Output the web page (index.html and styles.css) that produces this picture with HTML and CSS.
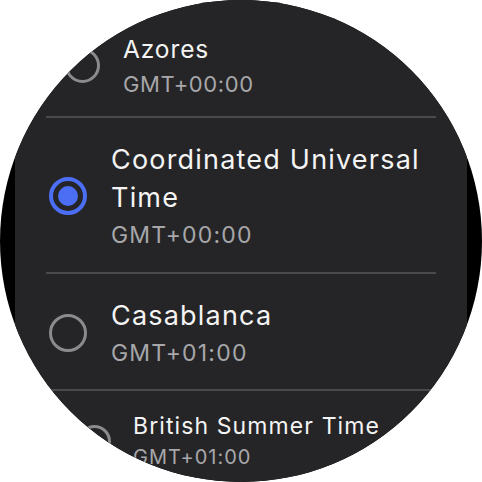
FILE: index.html
```html
<!DOCTYPE html>
<html>
<head>
<meta charset="utf-8">
<link rel="stylesheet" href="styles.css">
</head>
<body>
<div class="watch">
  <div class="screen">
    <div class="list">
      <div class="row row--azores">
        <span class="radio radio--azores"></span>
        <div class="text">
          <div class="title title--azores">Azores</div>
          <div class="sub sub--azores">GMT+00:00</div>
        </div>
      </div>
      <div class="row row--utc">
        <span class="radio radio--on"></span>
        <div class="text">
          <div class="title">Coordinated Universal Time</div>
          <div class="sub">GMT+00:00</div>
        </div>
      </div>
      <div class="row row--casa">
        <span class="radio"></span>
        <div class="text">
          <div class="title">Casablanca</div>
          <div class="sub">GMT+01:00</div>
        </div>
      </div>
      <div class="row row--bst">
        <span class="radio radio--bst"></span>
        <div class="text">
          <div class="title title--bst">British Summer Time</div>
          <div class="sub sub--bst">GMT+01:00</div>
        </div>
      </div>
    </div>
  </div>
</div>
</body>
</html>
```
FILE: styles.css
```css
html, body {
  margin: 0;
  padding: 0;
  background: #ffffff;
}
.watch {
  width: 482px;
  height: 482px;
  border-radius: 50%;
  background: #000000;
  overflow: hidden;
  font-family: Inter, "Open Sans", sans-serif;
}
.screen {
  height: 482px;
  margin: 0 15px;
  background: #252527;
  overflow: hidden;
}
.list {
  margin: 0 31px;
  padding-top: 12px;
}
.row {
  display: flex;
  align-items: center;
  gap: 24px;
  border-bottom: 2px solid #4a4a4d;
  box-sizing: border-box;
}
.row--azores { height: 106px; padding-left: 19px; padding-top: 3px; gap: 23px; }
.row--utc { height: 156px; padding-left: 3px; padding-top: 2px; }
.row--casa { height: 117px; padding-left: 3px; padding-top: 2px; }
.row--bst { height: 100px; padding-left: 32px; gap: 22px; border-bottom: none; }

.radio {
  flex: none;
  width: 38px;
  height: 38px;
  border-radius: 50%;
  border: 3px solid #8b8b8e;
  box-sizing: border-box;
  display: flex;
  align-items: center;
  justify-content: center;
}
.radio--azores { width: 35px; height: 35px; }
.radio--bst { width: 33px; height: 33px; }
.radio--on {
  border: 4px solid #4c6ef5;
}
.radio--on::after {
  content: "";
  width: 20px;
  height: 20px;
  border-radius: 50%;
  background: #4c6ef5;
}
.text {
  flex: 1;
  min-width: 0;
}
.title {
  color: #f4f4f4;
  font-size: 27px;
  line-height: 38px;
  letter-spacing: 1.2px;
}
.sub {
  color: #a7a7aa;
  font-size: 23px;
  line-height: 32px;
  letter-spacing: 1.2px;
  margin-top: 2px;
}
.title--azores { font-size: 24.5px; line-height: 34px; letter-spacing: 0.9px; }
.sub--azores { font-size: 22px; line-height: 30px; letter-spacing: 0.6px; margin-top: 3px; }
.title--bst { font-size: 23px; line-height: 32px; letter-spacing: 1.1px; }
.sub--bst { font-size: 20px; line-height: 30px; letter-spacing: 1px; margin-top: 0; }
```
